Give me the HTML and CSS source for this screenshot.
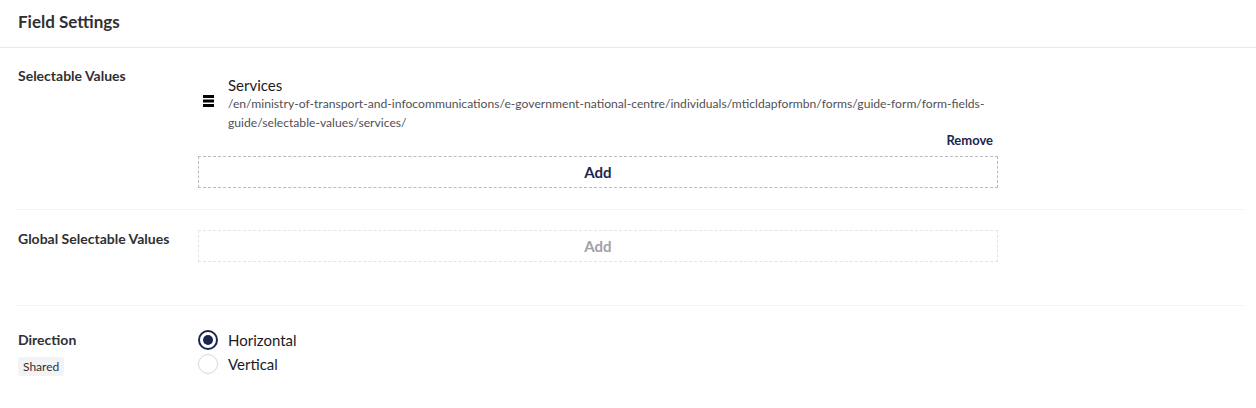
FILE: index.html
```html
<!DOCTYPE html>
<html>
<head>
<meta charset="utf-8">
<link rel="stylesheet" href="styles.css">
</head>
<body>
<div class="panel">
  <div class="panel-header">Field Settings</div>
  <div class="section sec-values">
    <div class="label">Selectable Values</div>
    <div class="control">
      <div class="item">
        <div class="handle">
          <svg width="11" height="12" viewBox="0 0 11 12"><rect x="0" y="0" width="11" height="3" fill="#000"/><rect x="0" y="4.5" width="11" height="3" fill="#000"/><rect x="0" y="9" width="11" height="3" fill="#000"/></svg>
        </div>
        <div class="item-body">
          <div class="item-name">Services</div>
          <div class="item-path">/en/ministry-of-transport-and-infocommunications/e-government-national-centre/individuals/mticldapformbn/forms/guide-form/form-fields-guide/selectable-values/services/</div>
          <div class="item-actions"><span class="remove">Remove</span></div>
        </div>
      </div>
      <div class="add-btn">Add</div>
    </div>
  </div>
  <div class="section sec-global">
    <div class="label">Global Selectable Values</div>
    <div class="control">
      <div class="add-btn disabled">Add</div>
    </div>
  </div>
  <div class="section sec-direction">
    <div class="label">Direction<div><span class="badge">Shared</span></div></div>
    <div class="control">
      <label class="radio"><span class="dot checked"></span>Horizontal</label>
      <label class="radio"><span class="dot"></span>Vertical</label>
    </div>
  </div>
</div>
</body>
</html>
```
FILE: styles.css
```css
html, body {
  margin: 0;
  padding: 0;
  background: #fff;
}
body {
  font-family: Lato, "Open Sans", sans-serif;
  color: #303033;
}
.panel {
  width: 1256px;
}
.panel-header {
  height: 48px;
  box-sizing: border-box;
  padding: 12px 18px 0;
  font-size: 17px;
  font-weight: 700;
  line-height: 20px;
  border-bottom: 1px solid #e9e9eb;
}
.section {
  display: flex;
  margin: 0 12px 0 16px;
  border-bottom: 1px solid #f3f3f5;
}
.section:last-child {
  border-bottom: none;
}
.label {
  width: 182px;
  flex: none;
  box-sizing: border-box;
  padding-left: 2px;
  font-size: 14px;
  font-weight: 700;
  line-height: 16px;
}
.control {
  width: 800px;
  flex: none;
}
.sec-values {
  padding: 20px 0 21px;
}
.sec-global {
  padding: 20px 0 43px;
}
.sec-global .label {
  padding-top: 1px;
}
.sec-direction {
  padding: 22px 0 30px;
}
.sec-direction .label {
  padding-top: 4px;
}
.item {
  display: flex;
  align-items: flex-start;
  padding-top: 8px;
}
.handle {
  width: 30px;
  flex: none;
  display: flex;
  padding-left: 5px;
  padding-top: 19px;
  box-sizing: border-box;
}
.handle svg {
  display: block;
}
.item-body {
  flex: 1;
  padding-right: 5px;
}
.item-name {
  font-size: 15px;
  line-height: 18px;
  color: #1b1b1f;
}
.item-path {
  font-size: 12.15px;
  line-height: 19px;
  color: #515054;
  width: 765px;
}
.item-actions {
  display: flex;
  justify-content: flex-end;
}
.remove {
  font-size: 13px;
  font-weight: 700;
  line-height: 16px;
  color: #1b264f;
}
.add-btn {
  margin-top: 8px;
  height: 32px;
  box-sizing: border-box;
  border: 1px dashed #bbbabf;
  display: flex;
  align-items: center;
  justify-content: center;
  font-size: 15px;
  font-weight: 700;
  color: #1b264f;
}
.add-btn.disabled {
  margin-top: 0;
  border-color: #e4e4e7;
  color: #a2a1a6;
}
.badge {
  display: inline-block;
  margin-top: 9px;
  padding: 2px 5px 2px;
  font-size: 12px;
  font-weight: 400;
  line-height: 15px;
  background: #f3f3f5;
  border-radius: 3px;
  color: #303033;
}
.radio {
  display: flex;
  align-items: center;
  height: 24px;
  font-size: 15px;
  color: #1b1b1f;
}
.dot {
  width: 20px;
  height: 20px;
  box-sizing: border-box;
  border-radius: 50%;
  border: 1px solid #d8d7d9;
  margin-right: 10px;
  position: relative;
}
.dot.checked {
  border: 2px solid #1b264f;
}
.dot.checked::after {
  content: "";
  position: absolute;
  left: 3px;
  top: 3px;
  width: 10px;
  height: 10px;
  border-radius: 50%;
  background: #1b264f;
}
```
